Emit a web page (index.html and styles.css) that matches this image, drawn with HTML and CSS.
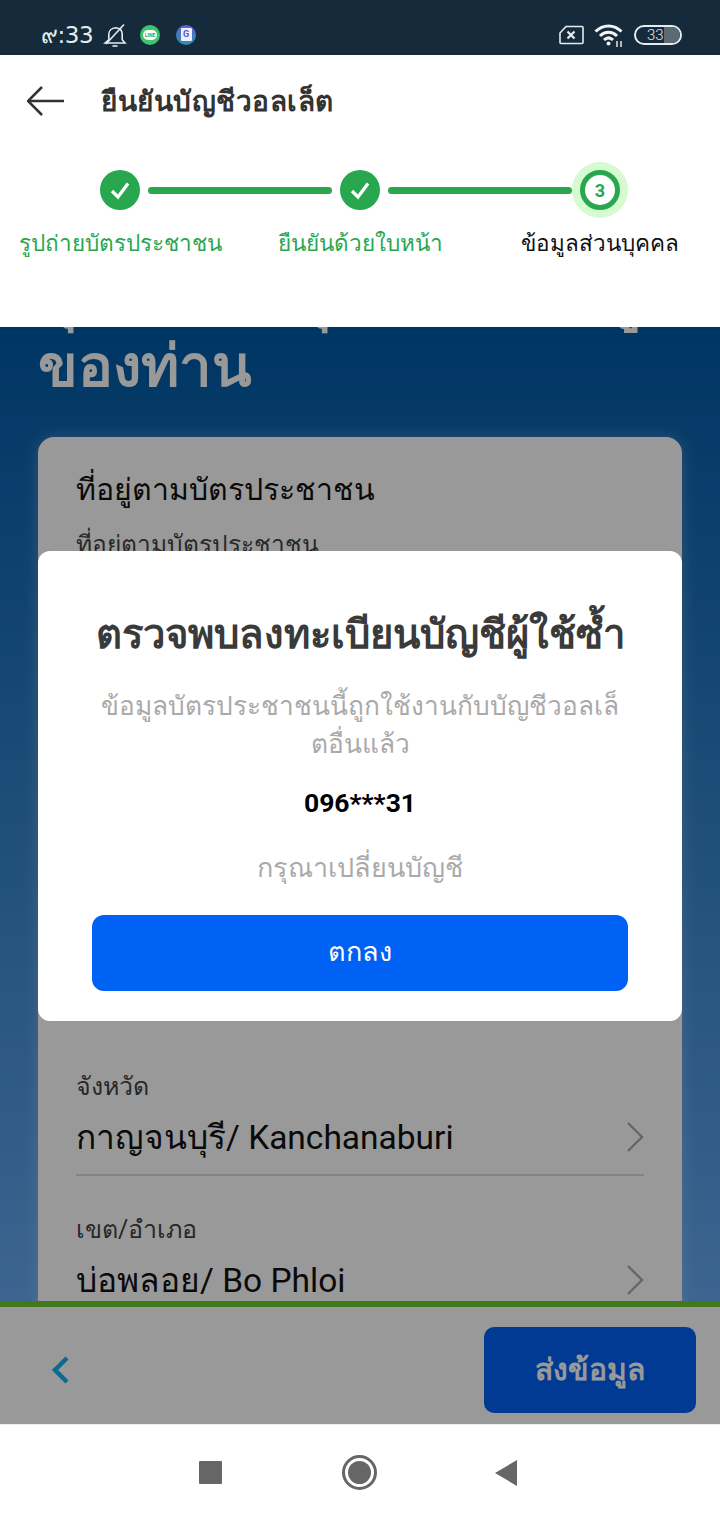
FILE: index.html
```html
<!DOCTYPE html>
<html lang="th">
<head>
<meta charset="utf-8">
<title>ยืนยันบัญชีวอลเล็ต</title>
<link rel="stylesheet" href="styles.css">
</head>
<body>
<div class="app">
  <div class="status">
    <div class="status-left">
      <span class="time">๙:33</span>
      <svg class="ic-bell" width="24" height="24" viewBox="0 0 24 24" fill="none" stroke="#e6ebee" stroke-width="1.6"><path d="M2 20h20l-2.800-3.200V11c0-3.400-2.500-5.800-6.500-6.200-4 .4-6.900 2.800-6.900 6.200v5.800z"/><path d="M9.500 23h5"/><path d="M3 21L21 1.500"/></svg>
      <span class="app-dot dot-line"><span class="line-bubble">LINE</span></span>
      <span class="app-dot dot-g"><span class="g-card">G</span></span>
    </div>
    <div class="status-right">
      <svg class="ic-sim" width="25" height="20" viewBox="0 0 25 20" fill="none" stroke="#e6ebee"><path d="M7 1.500h16a1 1 0 0 1 1 1v15a1 1 0 0 1-1 1H2a1 1 0 0 1-1-1V8z" stroke-width="1.600"/><path d="M8.500 6.500l7 7M15.500 6.500l-7 7" stroke-width="2.200"/></svg>
      <svg class="ic-wifi" width="30" height="24" viewBox="0 0 30 24" fill="none" stroke="#f2f4f6" stroke-width="3"><path d="M1.500 8.500C9 1 20 1 27.500 8.500"/><path d="M6 13c5-5 12-5 17 0"/><path d="M10 17c3-2.800 6-2.800 9 0"/><circle cx="14.500" cy="20.500" r="2" fill="#f2f4f6" stroke="none"/><path d="M23 18v6M27 18v6" stroke-width="1.400"/></svg>
      <div class="battery"><span class="battery-num">33</span><span class="battery-level"></span></div>
    </div>
  </div>

  <header class="head">
    <div class="titlebar">
      <svg class="back" width="38" height="32" viewBox="0 0 38 32" fill="none" stroke="#333" stroke-width="2.600"><path d="M37 16H1"/><path d="M15 2L1 16l14 14"/></svg>
      <h1 class="title">ยืนยันบัญชีวอลเล็ต</h1>
    </div>
    <div class="steps">
      <div class="step">
        <div class="track">
          <span class="bubble"><svg width="24" height="24" viewBox="0 0 24 24" fill="none" stroke="#fff" stroke-width="3.200"><path d="M4 13l6 6L20 5.500"/></svg></span>
          <span class="bar"></span>
        </div>
        <div class="step-label done">รูปถ่ายบัตรประชาชน</div>
      </div>
      <div class="step">
        <div class="track">
          <span class="bubble"><svg width="24" height="24" viewBox="0 0 24 24" fill="none" stroke="#fff" stroke-width="3.200"><path d="M4 13l6 6L20 5.500"/></svg></span>
          <span class="bar"></span>
        </div>
        <div class="step-label done">ยืนยันด้วยใบหน้า</div>
      </div>
      <div class="step last">
        <div class="track">
          <span class="current"><span class="current-in">3</span></span>
        </div>
        <div class="step-label">ข้อมูลส่วนบุคคล</div>
      </div>
    </div>
  </header>

  <main class="main">
    <div class="scroll">
      <h2 class="hero">คุณต้องระบุรายการข้อมูล<br>ของท่าน</h2>
      <section class="card">
        <h3 class="card-title">ที่อยู่ตามบัตรประชาชน</h3>
        <div class="hint">ที่อยู่ตามบัตรประชาชน</div>
        <div class="gap"></div>
        <div class="field">
          <div class="field-label">จังหวัด</div>
          <div class="field-row"><span>กาญจนบุรี/ Kanchanaburi</span><svg class="chev" width="18" height="32" viewBox="0 0 18 32" fill="none" stroke="#aaa" stroke-width="2.400"><path d="M2 2l14 14L2 30"/></svg></div>
        </div>
        <div class="field">
          <div class="field-label">เขต/อำเภอ</div>
          <div class="field-row"><span>บ่อพลอย/ Bo Phloi</span><svg class="chev" width="18" height="32" viewBox="0 0 18 32" fill="none" stroke="#aaa" stroke-width="2.400"><path d="M2 2l14 14L2 30"/></svg></div>
        </div>
      </section>
    </div>
  </main>

  <footer class="foot">
    <svg width="20" height="28" viewBox="0 0 20 28" fill="none" stroke="#15b0ee" stroke-width="4.500"><path d="M17 2L5 14l12 12"/></svg>
    <button class="send">ส่งข้อมูล</button>
  </footer>

  <nav class="nav">
    <span class="nav-square"></span>
    <span class="nav-home"><span class="nav-home-in"></span></span>
    <svg class="nav-back" width="24" height="28" viewBox="0 0 24 28"><path d="M23 1v26L1 14z" fill="#666"/></svg>
  </nav>

  <div class="scrim">
    <div class="modal">
      <h2 class="modal-title">ตรวจพบลงทะเบียนบัญชีผู้ใช้ซ้ำ</h2>
      <p class="modal-text">ข้อมูลบัตรประชาชนนี้ถูกใช้งานกับบัญชีวอลเล็<br>ตอื่นแล้ว</p>
      <p class="modal-phone">096***31</p>
      <p class="modal-text modal-note">กรุณาเปลี่ยนบัญชี</p>
      <button class="ok">ตกลง</button>
    </div>
  </div>
</div>
</body>
</html>
```
FILE: styles.css
```css
* { box-sizing: border-box; margin: 0; padding: 0; }
html, body { width: 720px; height: 1520px; overflow: hidden; background: #fff; }
body { font-family: Roboto, "Noto Sans", "Liberation Sans", sans-serif; color: #111; }
button { font-family: inherit; border: 0; }

.app { position: relative; width: 720px; height: 1520px; display: flex; flex-direction: column; overflow: hidden; }

.status { height: 55px; flex: none; background: #152b3b; color: #e6ebee; display: flex; justify-content: space-between; align-items: center; padding: 14px 38px 0 41px; }
.status-left, .status-right { display: flex; align-items: center; }
.time { font-size: 23px; width: 52px; font-family: "DejaVu Sans", sans-serif; font-weight: 400; white-space: nowrap; letter-spacing: -0.5px; }
.ic-bell { margin-left: 10px; }
.app-dot { width: 20px; height: 20px; border-radius: 50%; display: flex; align-items: center; justify-content: center; }
.dot-line { margin-left: 13px; background: #3ec46f; }
.line-bubble { width: 14px; height: 10px; border-radius: 5px; background: #fff; color: #2a9f57; font-size: 5px; line-height: 10px; text-align: center; font-weight: 700; }
.dot-g { margin-left: 16px; background: linear-gradient(#5a63d8, #2f8fb0); }
.g-card { width: 11px; height: 13px; background: #eef; color: #5a55d0; font-size: 9px; line-height: 13px; text-align: center; font-weight: 700; border-radius: 1px; }
.ic-wifi { margin-left: 10px; }
.battery { width: 48px; height: 20px; border: 2px solid #e6ebee; border-radius: 10px; display: flex; align-items: center; justify-content: flex-end; position: relative; overflow: hidden; margin-left: 10px; }
.battery-num { font-size: 15px; position: absolute; left: 11px; top: -1px; font-weight: 300; }
.battery-level { width: 16px; height: 16px; background: #5a6b76; border-radius: 0 8px 8px 0; }

.head { height: 272px; flex: none; background: #fff; position: relative; z-index: 3; }
.titlebar { display: flex; align-items: center; height: 92px; padding-left: 27px; }
.title { font-size: 28px; font-weight: 700; color: #333; margin-left: 36px; letter-spacing: 0.5px; }
.steps { display: flex; height: 180px; padding-top: 11px; }
.step { width: 240px; display: flex; flex-direction: column; }
.track { display: flex; align-items: center; height: 64px; padding-left: 100px; }
.bubble { width: 40px; height: 40px; flex: none; border-radius: 50%; background: #28a74f; display: flex; align-items: center; justify-content: center; }
.bar { width: 184px; height: 7px; margin-left: 8px; border-radius: 4px; background: #28a74f; flex: none; }
.current { width: 56px; height: 56px; border-radius: 50%; background: #d5fbd0; display: flex; align-items: center; justify-content: center; margin-left: -8px; }
.current-in { width: 40px; height: 40px; border-radius: 50%; background: #fff; border: 5px solid #28a74f; color: #28a74f; font-size: 18px; font-weight: 700; display: flex; align-items: center; justify-content: center; }
.step-label { width: 240px; text-align: center; font-size: 22.500px; line-height: 36px; margin-top: 3px; color: #111; white-space: nowrap; }
.step-label.done { color: #28a74f; }

.main { flex: 1; min-height: 0; overflow: hidden; background: linear-gradient(#005aa6, #66a8f0); position: relative; }
.scroll { padding: 0 38px; margin-top: -64px; }
.hero { font-size: 58px; line-height: 69px; font-weight: 700; color: #fff; margin-bottom: 36px; white-space: nowrap; }
.card { background: #fff; border-radius: 16px; padding: 30px 38px 0; height: 900px; box-shadow: 0 0 16px rgba(255,255,255,.25); }
.card-title { font-size: 30.250px; line-height: 46px; font-weight: 400; }
.hint { font-size: 24.500px; line-height: 32px; color: #444; margin-top: 16px; }
.gap { height: 510px; }
.field { margin-bottom: 38px; }
.field-label { font-size: 25px; line-height: 32px; color: #444; }
.field-row { display: flex; justify-content: space-between; align-items: center; font-size: 33.500px; height: 73px; padding-bottom: 3px; border-bottom: 2px solid #ddd; }

.foot { height: 123px; flex: none; background: #fff; border-top: 6px solid #6bc92e; display: flex; align-items: center; justify-content: space-between; padding: 8px 24px 0 50px; position: relative; }
.send { width: 212px; height: 86px; border-radius: 10px; background: #0061f5; color: #fff; font-size: 30px; font-weight: 700; }

.nav { height: 96px; flex: none; background: #fff; display: flex; align-items: center; position: relative; z-index: 3; padding-left: 199px; border-top: 1px solid #eee; }
.nav-square { width: 23px; height: 23px; background: #666; border-radius: 1px; }
.nav-home { width: 35px; height: 35px; margin-left: 120px; border: 3px solid #666; border-radius: 50%; display: flex; align-items: center; justify-content: center; }
.nav-home-in { width: 23px; height: 23px; border-radius: 50%; background: #666; }
.nav-back { margin-left: 117px; }

.scrim { position: absolute; left: 0; right: 0; top: 327px; height: 1097px; background: rgba(0,0,0,.4); z-index: 2; }
.modal { position: absolute; left: 38px; top: 224px; width: 644px; height: 470px; background: #fff; border-radius: 12px; padding: 54px 54px 0; text-align: center; }
.modal-title { font-size: 40px; line-height: 60px; font-weight: 700; color: #3a3a3a; white-space: nowrap; margin: 0 -20px; }
.modal-text { font-size: 26.250px; line-height: 38px; color: #aaa; margin-top: 22px; white-space: nowrap; }
.modal-phone { font-size: 26.500px; line-height: 38px; font-weight: 700; color: #000; margin-top: 21px; }
.modal-note { margin-top: 27px; font-size: 27px; }
.ok { width: 536px; height: 76px; border-radius: 12px; background: #0061f5; color: #fff; font-size: 27px; margin-top: 28px; padding-bottom: 3px; }
```
